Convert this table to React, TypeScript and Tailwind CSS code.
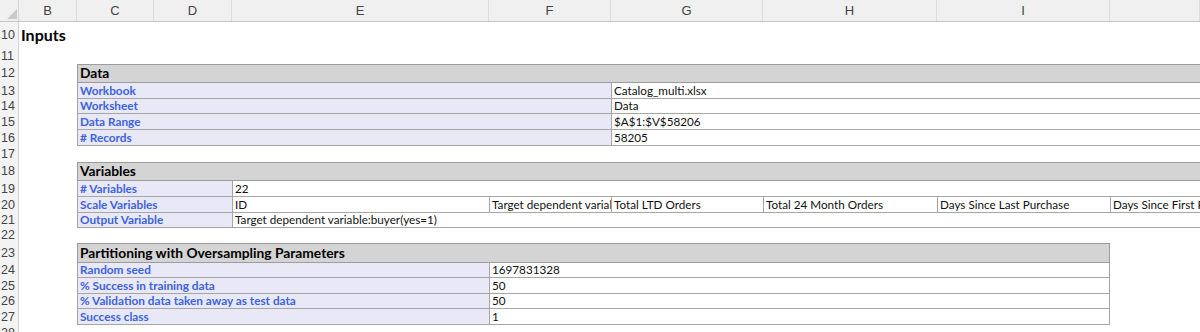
import React from 'react';

// sheet columns B..J after the 19px row-number gutter
const GRID = 'grid h-full grid-cols-[58px_77px_78px_257px_122px_152px_174px_173px_90px]';

const LABEL =
  'flex items-center overflow-hidden whitespace-nowrap border-b border-l border-[#a6a6a6] bg-[#e8e8f7] px-[2px] text-[11.8px] font-bold text-[#3d63de]';
const VALUE =
  'flex items-center overflow-hidden whitespace-nowrap border-b border-l border-[#a6a6a6] bg-white px-[2px] text-[11.7px] text-[#111]';
const HEAD =
  'flex items-center overflow-hidden whitespace-nowrap border-y border-l border-[#9c9c9c] bg-[#d4d4d4] px-[2px] text-[13.8px] font-bold text-black';

function Row({ n, h, children }: { n: number; h: string; children?: React.ReactNode }) {
  return (
    <div className={`flex ${h}`}>
      <div className="flex w-[19px] shrink-0 items-center overflow-hidden border-r border-[#d0d0d0] bg-[#f3f3f3] pl-[1px] font-['Liberation_Sans',sans-serif] text-[12.5px] text-[#444]">
        {n}
      </div>
      <div className={`${GRID} flex-1`}>{children}</div>
    </div>
  );
}

const letters = ['B', 'C', 'D', 'E', 'F', 'G', 'H', 'I', ''];

const dataRows = [
  ['Workbook', 'Catalog_multi.xlsx'],
  ['Worksheet', 'Data'],
  ['Data Range', '$A$1:$V$58206'],
  ['# Records', '58205'],
];

const scaleVars = [
  'ID',
  'Target dependent variable:buyer(yes=1)',
  'Total LTD Orders',
  'Total 24 Month Orders',
  'Days Since Last Purchase',
  'Days Since First Purchase',
];

const partRows = [
  ['Random seed', '1697831328'],
  ['% Success in training data', '50'],
  ['% Validation data taken away as test data', '50'],
  ['Success class', '1'],
];

export default function App() {
  const dataHeights = ['h-[16px]', 'h-[15px]', 'h-[16px]', 'h-[16px]'];
  const partHeights = ['h-[15px]', 'h-[16px]', 'h-[15px]', 'h-[16px]'];

  return (
    <div className="h-[332px] w-[1200px] overflow-hidden bg-white font-['Lato','Liberation_Sans',sans-serif]">
      {/* column headers */}
      <div className="flex h-[22px] border-b border-[#c6c6c6] bg-[#f0f0f0]">
        <div className="w-[19px] shrink-0 border-r border-[#d6d6d6]">
          <svg width="19" height="21" viewBox="0 0 19 21">
            <polygon points="17,9 17,19 7,19" fill="#c9c9c9" />
          </svg>
        </div>
        <div className={`${GRID} flex-1`}>
          {letters.map((l, i) => (
            <div
              key={i}
              className="flex items-center justify-center border-r border-[#dcdcdc] font-['Liberation_Sans',sans-serif] text-[13px] text-[#444]"
            >
              {l}
            </div>
          ))}
        </div>
      </div>

      <Row n={10} h="h-[26px]">
        <div className="col-span-3 flex items-center pl-[2px] text-[16px] font-bold text-black">Inputs</div>
      </Row>
      <Row n={11} h="h-[16px]" />

      {/* Data */}
      <Row n={12} h="h-[19px]">
        <div className={`${HEAD} col-span-8 col-start-2`}>Data</div>
      </Row>
      {dataRows.map(([k, v], i) => (
        <Row key={k} n={13 + i} h={dataHeights[i]}>
          <div className={`${LABEL} col-span-4 col-start-2`}>{k}</div>
          <div className={`${VALUE} col-span-4 col-start-6`}>{v}</div>
        </Row>
      ))}
      <Row n={17} h="h-[16px]" />

      {/* Variables */}
      <Row n={18} h="h-[19px]">
        <div className={`${HEAD} col-span-8 col-start-2`}>Variables</div>
      </Row>
      <Row n={19} h="h-[16px]">
        <div className={`${LABEL} col-span-2 col-start-2`}># Variables</div>
        <div className={`${VALUE} col-span-6 col-start-4`}>22</div>
      </Row>
      <Row n={20} h="h-[16px]">
        <div className={`${LABEL} col-span-2 col-start-2`}>Scale Variables</div>
        {scaleVars.map((s) => (
          <div key={s} className={VALUE}>
            {s}
          </div>
        ))}
      </Row>
      <Row n={21} h="h-[15px]">
        <div className={`${LABEL} col-span-2 col-start-2`}>Output Variable</div>
        <div className={`${VALUE} col-span-6 col-start-4`}>Target dependent variable:buyer(yes=1)</div>
      </Row>
      <Row n={22} h="h-[15px]" />

      {/* Partitioning */}
      <Row n={23} h="h-[20px]">
        <div className={`${HEAD} col-span-7 col-start-2 border-r`}>Partitioning with Oversampling Parameters</div>
      </Row>
      {partRows.map(([k, v], i) => (
        <Row key={k} n={24 + i} h={partHeights[i]}>
          <div className={`${LABEL} col-span-3 col-start-2`}>{k}</div>
          <div className={`${VALUE} col-span-4 col-start-5 border-r`}>{v}</div>
        </Row>
      ))}
      <Row n={28} h="h-[16px]" />
    </div>
  );
}
